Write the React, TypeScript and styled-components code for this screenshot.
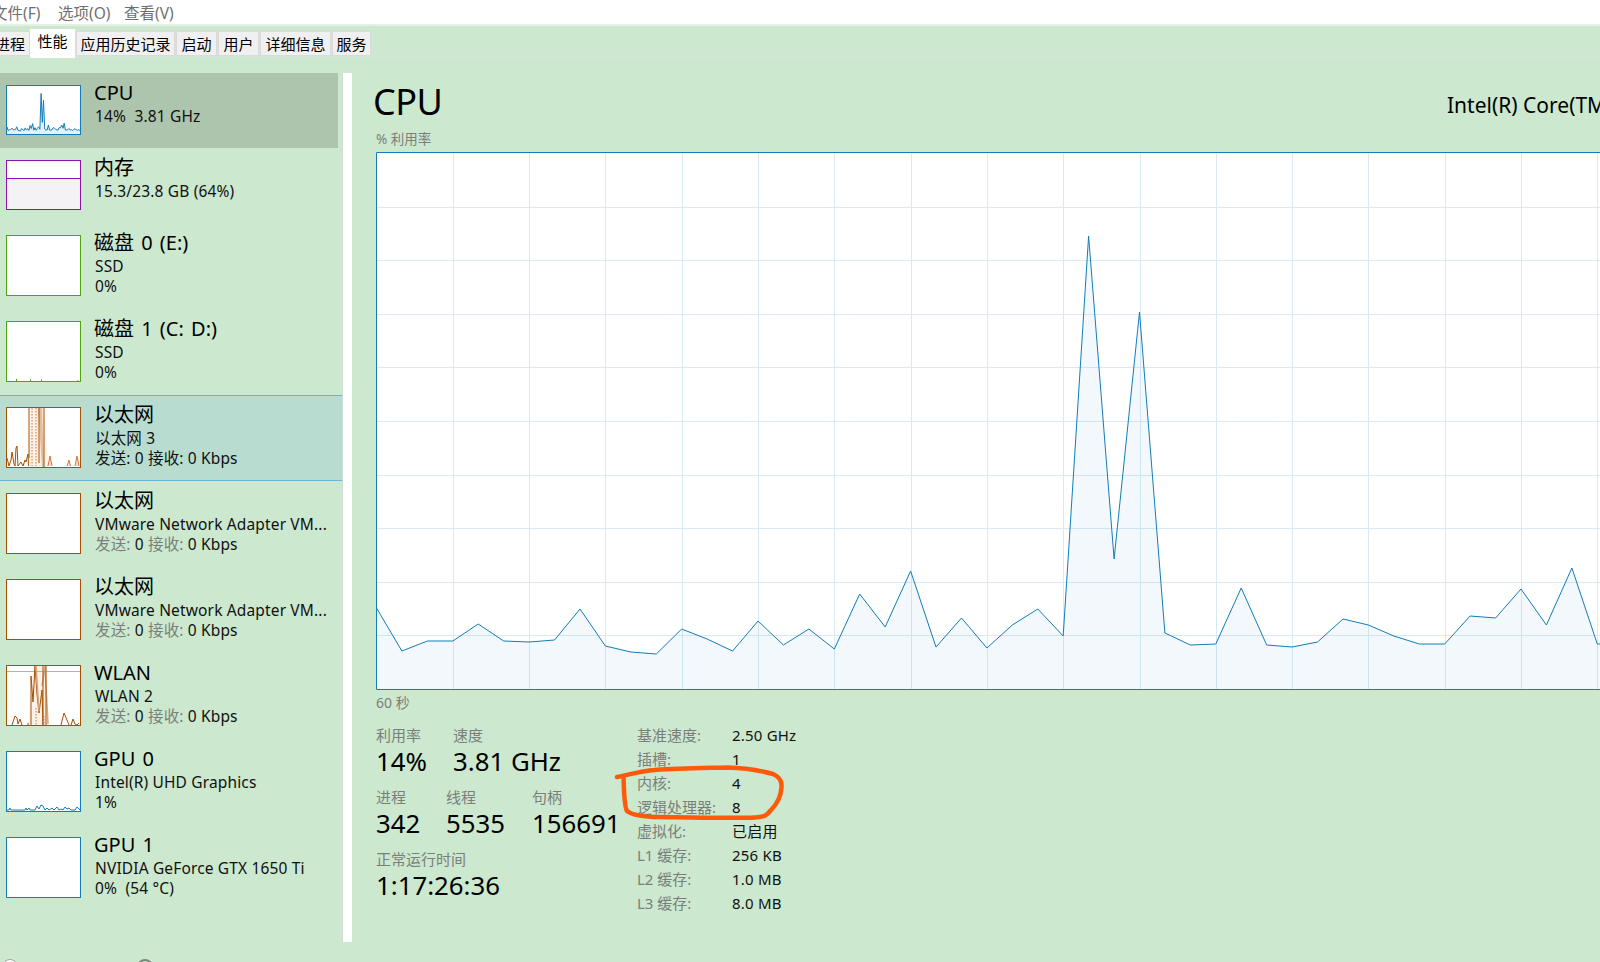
import React from "react";
import styled, { createGlobalStyle } from "styled-components";

const FONT = `"Noto Sans", "Noto Sans CJK SC", sans-serif`;
const BLUE = "#117dbb";
const GREEN = "#4da60c";
const PURPLE = "#8b12ae";
const ORANGE = "#a74f01";

const Global = createGlobalStyle`
  html, body { margin: 0; padding: 0; background: #cce8cf; overflow: hidden; }
  * { box-sizing: border-box; }
`;

const Page = styled.div`
  width: 1600px;
  height: 962px;
  overflow: hidden;
  display: flex;
  flex-direction: column;
  background: #cce8cf;
  font-family: ${FONT};
  color: #000;
`;

const MenuBar = styled.div`
  height: 26px;
  flex: none;
  background: #fff;
  border-bottom: 2px solid #e4efe5;
  display: flex;
  margin-left: -15px;
`;

const MenuItem = styled.div`
  width: 66px;
  padding-left: 7px;
  font-size: 15.5px;
  line-height: 27px;
  white-space: nowrap;
  color: #6f6f6f;
`;

const TabStrip = styled.div`
  height: 32px;
  flex: none;
  padding: 3px 0 0;
  display: flex;
  gap: 1px;
  align-items: flex-start;
  border-bottom: 1px solid #dce3dd;
`;

const Tab = styled.div<{ $active?: boolean; $w: number; $first?: boolean }>`
  width: ${(p) => p.$w}px;
  height: ${(p) => (p.$active ? "29px" : "25px")};
  margin-top: ${(p) => (p.$active ? "0" : "2px")};
  margin-left: ${(p) => (p.$first ? "-10px" : "0")};
  margin-right: ${(p) => (p.$first ? "-1px" : "0")};
  font-size: 15px;
  line-height: ${(p) => (p.$active ? "23px" : "25px")};
  text-align: center;
  white-space: nowrap;
  background: ${(p) => (p.$active ? "#fff" : "#f0f0f0")};
  border: 1px solid ${(p) => (p.$active ? "#fff" : "#dadada")};
  position: relative;
`;

const Body = styled.div`
  margin-top: 15px;
  height: 869px;
  flex: none;
  display: flex;
  overflow: hidden;
`;

const Sidebar = styled.div`
  width: 342px;
  flex: none;
  display: flex;
  flex-direction: column;
`;

const ScrollTrack = styled.div`
  width: 10px;
  flex: none;
  background: #fff;
  border-left: 1px solid #cfdcd0;
`;

const Row = styled.div<{ $tall?: boolean; $state?: "focus" | "hover" }>`
  height: ${(p) => (p.$tall ? "86px" : "75px")};
  flex: none;
  padding: 12px 0 0 6px;
  display: flex;
  margin-right: ${(p) => (p.$state === "focus" ? "4px" : "0")};
  background: ${(p) =>
    p.$state === "focus" ? "#adc4ad" : p.$state === "hover" ? "#b8ddd0" : "transparent"};
  box-shadow: ${(p) =>
    p.$state === "hover" ? "inset 0 1px 0 #66b5dc, inset 0 -1px 0 #66b5dc" : "none"};
`;

const Thumb = styled.div<{ $color: string; $h: number }>`
  width: 75px;
  height: ${(p) => p.$h}px;
  flex: none;
  background: #fff;
  border: 1px solid ${(p) => p.$color};
  overflow: hidden;
  svg { display: block; }
`;

const Info = styled.div`
  margin: -6px 0 0 13px;
  min-width: 0;
  white-space: nowrap;
`;

const RowName = styled.div`
  font-size: 20px;
  line-height: 28px;
  height: 27px;
  word-spacing: 2px;
`;

const RowLine = styled.div`
  font-size: 15.5px;
  line-height: 21px;
  height: 20px;
  margin-left: 1px;
  color: #111;
  letter-spacing: 0.15px;
  white-space: pre;
`;

const Faint = styled.span<{ $dark?: boolean }>`
  color: ${(p) => (p.$dark ? "#111" : "#7b7f7b")};
`;

const Main = styled.div`
  flex: 1;
  min-width: 0;
  padding-left: 24px;
  overflow: hidden;
`;

const HeadRow = styled.div`
  height: 57px;
  display: flex;
  align-items: center;
`;

const Title = styled.div`
  font-size: 36px;
  line-height: 55px;
  margin-left: -3px;
  letter-spacing: -0.5px;
`;

const Model = styled.div`
  margin-left: auto;
  width: 153px;
  overflow: hidden;
  white-space: nowrap;
  font-size: 21px;
  line-height: 24px;
  padding-top: 7px;
`;

const ChartLabel = styled.div`
  height: 22px;
  font-size: 13.5px;
  line-height: 18px;
  color: #7b7f7b;
`;

const Chart = styled.div`
  height: 538px;
  width: 1224px;
  background: #fff;
  svg { display: block; }
`;

const AxisLabel = styled.div`
  height: 33px;
  font-size: 14px;
  line-height: 26px;
  color: #7b7f7b;
`;

const Stats = styled.div`
  position: relative;
  display: flex;
`;

const LeftStats = styled.div`
  width: 261px;
  flex: none;
  display: flex;
  flex-direction: column;
  gap: 10px;
`;

const StatGroup = styled.div`
  display: flex;
`;

const Stat = styled.div<{ $w?: number }>`
  width: ${(p) => (p.$w ? `${p.$w}px` : "auto")};
  white-space: nowrap;
`;

const StatLabel = styled.div`
  font-size: 15px;
  line-height: 24px;
  color: #7b7f7b;
`;

const StatValue = styled.div`
  font-size: 25.8px;
  line-height: 28px;
`;

const SpecGrid = styled.div`
  display: grid;
  grid-template-columns: 95px auto;
  grid-auto-rows: 24px;
  font-size: 15px;
  line-height: 24px;
  white-space: nowrap;
`;

const SpecLabel = styled.div`
  color: #7b7f7b;
`;

const SpecValue = styled.div`
  color: #111;
  letter-spacing: 0.2px;
`;

const Scribble = styled.svg`
  position: absolute;
  left: 234px;
  top: 41px;
  pointer-events: none;
`;

const Footer = styled.div`
  flex: 1;
  padding: 17px 0 0 2px;
  display: flex;
  gap: 119px;
  overflow: hidden;
`;

const Y = [
  608, 651, 641, 641, 624, 641, 642, 640, 609, 646, 652, 654, 629, 639, 651, 621, 645, 629, 649,
  594, 627, 571, 647, 618, 648, 625, 609, 636, 236, 559, 312, 633, 645, 644, 588, 645, 647, 642,
  619, 625, 636, 644, 644, 616, 618, 589, 625, 568, 644, 644,
];
const THUMB_TAIL = [642, 628, 645, 640, 650, 636, 630, 644, 648, 640, 652];

const STEP = 76.3 / 3;
const X0 = 376.5;
const snap = (v: number) => Math.round(v) + 0.5;
const chartPts = Y.map((y, i) => `${(X0 + STEP * i).toFixed(1)},${y}`).join(" ");
const chartFill = `${X0},689 ${chartPts} ${(X0 + STEP * 49).toFixed(1)},689`;
const vLines = Array.from({ length: 16 }, (_, i) => snap(X0 + 76.3 * (i + 1)));
const hLines = Array.from({ length: 9 }, (_, i) => snap(153 + 53.6 * (i + 1)));

const thumbY = [...Y, ...THUMB_TAIL];
const thumbPts = thumbY
  .map((y, i) => `${((i * 73) / 60).toFixed(1)},${(((y - 152) * 48) / 537).toFixed(1)}`)
  .join(" ");

const CpuSpark = () => (
  <svg width="73" height="48">
    <polygon points={`0,48 ${thumbPts} 73,48`} fill="rgba(17,125,187,0.10)" />
    <polyline points={thumbPts} fill="none" stroke={BLUE} strokeWidth="1" />
  </svg>
);

const MemSpark = () => (
  <svg width="73" height="48">
    <rect x="0" y="17" width="73" height="31" fill="#f4f2f4" />
    <line x1="0" x2="73" y1="17.5" y2="17.5" stroke={PURPLE} />
  </svg>
);

const DiskSpark = () => (
  <svg width="73" height="59">
    <path d="M9.5 59v-2M23.5 59v-1.500M34.500 59v-1.500M71 59v-1" stroke={GREEN} fill="none" />
  </svg>
);

const EthSpark = () => (
  <svg width="73" height="59">
    <path d="M21 59 L24 0 L37 0 L41 59 Z" fill="#fdf1e8" />
    <path d="M31 0 L35 0 L37 59 L35 59 Z" fill="#e3bd9f" />
    <path d="M25 0V58M29 0V58" stroke="#d8743a" strokeDasharray="1.500 1.500" fill="none" />
    <path
      d="M0 50 L2 58 L4 52 L5 44 L7 56 L8 58 L9 40 L10 38 L11 58 L14 54 L16 58 L18 52 L19 54 L21 46 L21.500 58"
      stroke={ORANGE}
      fill="none"
    />
    <path d="M22 50V0M32 0V55M37 0V59" stroke={ORANGE} fill="none" />
    <path d="M41 58L43 48L45 58M60 58L62 52L63.500 58M68 58L70 48L72 58" stroke="#d8743a" fill="#fbdcc7" />
  </svg>
);

const WlanSpark = () => (
  <svg width="73" height="59">
    <path d="M21 59 L25 10 L27 0 L38 0 L41 59 Z" fill="#fdf1e8" />
    <line x1="0" x2="73" y1="5.500" y2="5.500" stroke="#d9a57c" />
    <path
      d="M5 59 L8 50 L10 52 L11 58 L13 53 L15 59 M20 58 L22 58 M24 59 L24 10 L26 36 L28 0 L30 28 L32 47 L35 24 L36 59"
      stroke={ORANGE}
      fill="none"
    />
    <path d="M29 0L32 45M35 20L38 0L41 58" stroke="#d9a57c" fill="none" strokeWidth="1.500" />
    <path d="M36 0V59M39 0V59" stroke={ORANGE} fill="none" />
    <path d="M29 42V59M37 50V59" stroke="#d8743a" strokeDasharray="1.500 1.500" fill="none" />
    <path d="M54 59L57 47L60 54L62 59M64 59L66 53L68 58L70 59L72 57" stroke={ORANGE} fill="none" />
  </svg>
);

const GpuSpark = () => (
  <svg width="73" height="59">
    <polyline
      points="0,58 2,58 3,56 4,58 18,58 19,56 20,58 22,56 23,58 28,58 30,54 32,57 34,53 36,54 38,58 40,56 42,58 45,56 47,58 50,55 52,58 54,57 56,58 58,55 60,57 62,56 64,58 68,58 70,55 73,58"
      fill="none"
      stroke={BLUE}
    />
  </svg>
);

type RowData = {
  name: string;
  lines: React.ReactNode[];
  color: string;
  spark?: React.ReactNode;
  state?: "focus" | "hover";
};

const net = (dark?: boolean) => (
  <>
    <Faint $dark={dark}>发送:</Faint> 0 <Faint $dark={dark}>接收:</Faint> 0 Kbps
  </>
);

const rows: RowData[] = [
  { name: "CPU", lines: ["14%  3.81 GHz"], color: BLUE, spark: <CpuSpark />, state: "focus" },
  { name: "内存", lines: ["15.3/23.8 GB (64%)"], color: PURPLE, spark: <MemSpark /> },
  { name: "磁盘 0 (E:)", lines: ["SSD", "0%"], color: GREEN },
  { name: "磁盘 1 (C: D:)", lines: ["SSD", "0%"], color: GREEN, spark: <DiskSpark /> },
  { name: "以太网", lines: ["以太网 3", net(true)], color: ORANGE, spark: <EthSpark />, state: "hover" },
  { name: "以太网", lines: ["VMware Network Adapter VM...", net()], color: ORANGE },
  { name: "以太网", lines: ["VMware Network Adapter VM...", net()], color: ORANGE },
  { name: "WLAN", lines: ["WLAN 2", net()], color: ORANGE, spark: <WlanSpark /> },
  { name: "GPU 0", lines: ["Intel(R) UHD Graphics", "1%"], color: BLUE, spark: <GpuSpark /> },
  { name: "GPU 1", lines: ["NVIDIA GeForce GTX 1650 Ti", "0%  (54 °C)"], color: BLUE },
];

const specs = [
  ["基准速度:", "2.50 GHz"],
  ["插槽:", "1"],
  ["内核:", "4"],
  ["逻辑处理器:", "8"],
  ["虚拟化:", "已启用"],
  ["L1 缓存:", "256 KB"],
  ["L2 缓存:", "1.0 MB"],
  ["L3 缓存:", "8.0 MB"],
];

export default function App() {
  return (
    <Page>
      <Global />
      <MenuBar>
        <MenuItem>文件(F)</MenuItem>
        <MenuItem>选项(O)</MenuItem>
        <MenuItem>查看(V)</MenuItem>
      </MenuBar>
      <TabStrip>
        <Tab $first $w={40}>进程</Tab>
        <Tab $active $w={45}>性能</Tab>
        <Tab $w={99}>应用历史记录</Tab>
        <Tab $w={41}>启动</Tab>
        <Tab $w={41}>用户</Tab>
        <Tab $w={71}>详细信息</Tab>
        <Tab $w={39}>服务</Tab>
      </TabStrip>
      <Body>
        <Sidebar>
          {rows.map((r, i) => (
            <Row key={i} $tall={r.lines.length > 1} $state={r.state}>
              <Thumb $color={r.color} $h={r.lines.length > 1 ? 61 : 50}>
                {r.spark}
              </Thumb>
              <Info>
                <RowName>{r.name}</RowName>
                {r.lines.map((l, j) => (
                  <RowLine key={j}>{l}</RowLine>
                ))}
              </Info>
            </Row>
          ))}
        </Sidebar>
        <ScrollTrack />
        <Main>
          <HeadRow>
            <Title>CPU</Title>
            <Model>Intel(R) Core(TM)</Model>
          </HeadRow>
          <ChartLabel>% 利用率</ChartLabel>
          <Chart>
            <svg width="1224" height="538" viewBox="376 152 1224 538">
              {vLines.map((x) => (
                <line key={x} x1={x} x2={x} y1="152" y2="690" stroke="#d9eaf4" />
              ))}
              {hLines.map((y) => (
                <line key={y} x1="376" x2="1600" y1={y} y2={y} stroke="#d9eaf4" />
              ))}
              <polygon points={chartFill} fill="rgba(17,125,187,0.055)" />
              <polyline points={chartPts} fill="none" stroke={BLUE} strokeWidth="1" />
              <path d="M1600 152.500H376.500V689.500H1600" fill="none" stroke={BLUE} />
            </svg>
          </Chart>
          <AxisLabel>60 秒</AxisLabel>
          <Stats>
            <LeftStats>
              <StatGroup>
                <Stat $w={77}>
                  <StatLabel>利用率</StatLabel>
                  <StatValue>14%</StatValue>
                </Stat>
                <Stat>
                  <StatLabel>速度</StatLabel>
                  <StatValue>3.81 GHz</StatValue>
                </Stat>
              </StatGroup>
              <StatGroup>
                <Stat $w={70}>
                  <StatLabel>进程</StatLabel>
                  <StatValue>342</StatValue>
                </Stat>
                <Stat $w={86}>
                  <StatLabel>线程</StatLabel>
                  <StatValue>5535</StatValue>
                </Stat>
                <Stat>
                  <StatLabel>句柄</StatLabel>
                  <StatValue>156691</StatValue>
                </Stat>
              </StatGroup>
              <StatGroup>
                <Stat>
                  <StatLabel>正常运行时间</StatLabel>
                  <StatValue>1:17:26:36</StatValue>
                </Stat>
              </StatGroup>
            </LeftStats>
            <SpecGrid>
              {specs.map(([k, v]) => (
                <React.Fragment key={k}>
                  <SpecLabel>{k}</SpecLabel>
                  <SpecValue>{v}</SpecValue>
                </React.Fragment>
              ))}
            </SpecGrid>
            <Scribble width="180" height="60" viewBox="610 764 180 60">
              <path
                d="M617 777 C628 775 640 771 655 770 C680 768 710 768 727 767.500 C745 768 762 771 773 774 C780 777 782 782 781.500 787 C781 798 776 805 771 810 C767 815 765 817 755 817.500 C730 818.500 690 817.500 660 817 C645 817 632 815 627 811 C624 806 624 790 623.500 777"
                fill="none"
                stroke="#ff5a0a"
                strokeWidth="4.500"
                strokeLinecap="round"
                strokeLinejoin="round"
              />
            </Scribble>
          </Stats>
        </Main>
      </Body>
      <Footer>
        <svg width="16" height="16" viewBox="0 0 16 16">
          <circle cx="8" cy="8" r="7.500" fill="#fff" stroke="#9aa59b" />
        </svg>
        <svg width="16" height="16" viewBox="0 0 16 16">
          <circle cx="8" cy="8" r="7" fill="none" stroke="#7d857e" strokeWidth="2" />
        </svg>
      </Footer>
    </Page>
  );
}
